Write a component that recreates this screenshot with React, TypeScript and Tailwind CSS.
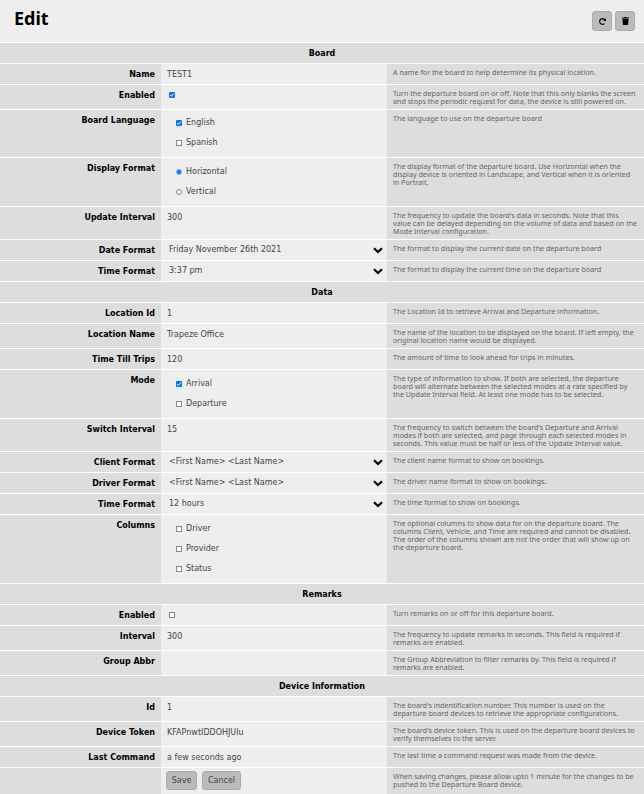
import { FaRedoAlt, FaTrash } from "react-icons/fa";
import type { ReactNode } from "react";

function Header({ title }: { title: string }) {
  return (
    <div className="h-[21px] bg-[#dddddd] border-b border-white text-center font-bold text-[8px] leading-[22px] text-black">
      {title}
    </div>
  );
}

function Row({ label, help, children, h }: { label: string; help?: ReactNode; children?: ReactNode; h: string }) {
  return (
    <div className={`grid grid-cols-[161px_226px_257px] border-b border-white ${h}`}>
      <div className="bg-[#dddddd] pr-[6px] pt-[6px] text-right font-bold text-[8px] leading-[10px] text-black">{label}</div>
      <div className="bg-[#eeeeee] text-[8px] leading-[10px] text-[#444444]">{children}</div>
      <div className="bg-[#dddddd] pl-[6px] pr-[6px] pt-[4px] text-[7.15px] leading-[8px] text-[#666666] font-['Noto_Sans',sans-serif]">{help}</div>
    </div>
  );
}

function Text({ children }: { children: ReactNode }) {
  return <div className="pl-[6px] pt-[6px]">{children}</div>;
}

function Select({ children }: { children: ReactNode }) {
  return (
    <div className="flex items-center justify-between pl-[8px] pr-[4px] pt-[5px]">
      <span>{children}</span>
      <svg width="10" height="7" viewBox="0 0 10 7">
        <path d="M1 1.2 L5 5 L9 1.2" stroke="black" strokeWidth="2.2" fill="none" />
      </svg>
    </div>
  );
}

function Check({ label, checked, radio }: { label: string; checked?: boolean; radio?: boolean }) {
  return (
    <div className="flex items-center gap-[4px] h-[20px] pl-[15px]">
      {radio ? (
        <span className={`w-[6px] h-[6px] rounded-full border ${checked ? "border-[#7ab3ff] bg-[#0075ff]" : "border-[#888888] bg-white"}`} />
      ) : (
        <Box checked={checked} />
      )}
      <span>{label}</span>
    </div>
  );
}

function Box({ checked }: { checked?: boolean }) {
  return checked ? (
    <svg width="6" height="6" viewBox="0 0 6 6" className="block">
      <rect width="6" height="6" rx="1" fill="#0075ff" />
      <path d="M1.1 3.1 L2.4 4.3 L4.9 1.6" stroke="white" strokeWidth="1" fill="none" />
    </svg>
  ) : (
    <span className="block w-[6px] h-[6px] border border-[#888888] bg-white" />
  );
}

function Options({ children, tight }: { children: ReactNode; tight?: boolean }) {
  return <div className={tight ? "pt-[2px]" : "pt-[3px]"}>{children}</div>;
}

const btn = "rounded-[3px] bg-[#bbbbbb] border border-[#aaaaaa] flex items-center justify-center";

export default function App() {
  return (
    <div className="w-[644px] h-[794px] overflow-hidden bg-[#eeeeee] font-['DejaVu_Sans',sans-serif]">
      <div className="h-[43px] flex justify-between border-b border-white pl-[14px] pr-[9px]">
        <h1 className="text-[18px] leading-[36px] font-bold text-black font-['Noto_Sans',sans-serif]">Edit</h1>
        <div className="flex gap-[3px] pt-[11px]">
          <button className={`w-[20px] h-[20px] ${btn}`}>
            <FaRedoAlt className="w-[7px] h-[7px] text-black" />
          </button>
          <button className={`w-[20px] h-[20px] ${btn}`}>
            <FaTrash className="w-[7px] h-[8px] text-black" />
          </button>
        </div>
      </div>

      <Header title="Board" />
      <Row h="h-[21px]" label="Name" help="A name for the board to help determine its physical location."><Text>TEST1</Text></Row>
      <Row h="h-[25px]" label="Enabled" help="Turn the departure board on or off. Note that this only blanks the screen and stops the periodic request for data, the device is still powered on.">
        <div className="pl-[8px] pt-[7px]"><Box checked /></div>
      </Row>
      <Row h="h-[48px]" label="Board Language" help="The language to use on the departure board">
        <Options tight><div className="pt-[1px]"><Check label="English" checked /><Check label="Spanish" /></div></Options>
      </Row>
      <Row h="h-[49px]" label="Display Format" help="The display format of the departure board. Use Horizontal when the display device is oriented in Landscape, and Vertical when it is oriented in Portrait.">
        <Options><div className="pt-[1px]"><Check label="Horizontal" radio checked /><Check label="Vertical" radio /></div></Options>
      </Row>
      <Row h="h-[33px]" label="Update Interval" help="The frequency to update the board's data in seconds. Note that this value can be delayed depending on the volume of data and based on the Mode Interval configuration."><Text>300</Text></Row>
      <Row h="h-[21px]" label="Date Format" help="The format to display the current date on the departure board"><Select>Friday November 26th 2021</Select></Row>
      <Row h="h-[21px]" label="Time Format" help="The format to display the current time on the departure board"><Select>3:37 pm</Select></Row>

      <Header title="Data" />
      <Row h="h-[21px]" label="Location Id" help="The Location Id to retrieve Arrival and Departure information."><Text>1</Text></Row>
      <Row h="h-[25px]" label="Location Name" help="The name of the location to be displayed on the board. If left empty, the original location name would be displayed."><Text>Trapeze Office</Text></Row>
      <Row h="h-[21px]" label="Time Till Trips" help="The amount of time to look ahead for trips in minutes."><Text>120</Text></Row>
      <Row h="h-[49px]" label="Mode" help="The type of information to show. If both are selected, the departure board will alternate between the selected modes at a rate specified by the Update Interval field. At least one mode has to be selected.">
        <Options><div className="pt-[1px]"><Check label="Arrival" checked /><Check label="Departure" /></div></Options>
      </Row>
      <Row h="h-[33px]" label="Switch Interval" help="The frequency to switch between the board's Departure and Arrival modes if both are selected, and page through each selected modes in seconds. This value must be half or less of the Update Interval value."><Text>15</Text></Row>
      <Row h="h-[21px]" label="Client Format" help="The client name format to show on bookings."><Select>{"<First Name> <Last Name>"}</Select></Row>
      <Row h="h-[21px]" label="Driver Format" help="The driver name format to show on bookings."><Select>{"<First Name> <Last Name>"}</Select></Row>
      <Row h="h-[21px]" label="Time Format" help="The time format to show on bookings."><Select>12 hours</Select></Row>
      <Row h="h-[69px]" label="Columns" help="The optional columns to show data for on the departure board. The columns Client, Vehicle, and Time are required and cannot be disabled. The order of the columns shown are not the order that will show up on the departure board.">
        <Options><div className="pt-[1px]"><Check label="Driver" /><Check label="Provider" /><Check label="Status" /></div></Options>
      </Row>

      <Header title="Remarks" />
      <Row h="h-[21px]" label="Enabled" help="Turn remarks on or off for this departure board.">
        <div className="pl-[8px] pt-[7px]"><Box /></div>
      </Row>
      <Row h="h-[25px]" label="Interval" help="The frequency to update remarks in seconds. This field is required if remarks are enabled."><Text>300</Text></Row>
      <Row h="h-[25px]" label="Group Abbr" help="The Group Abbreviation to filter remarks by. This field is required if remarks are enabled." />

      <Header title="Device Information" />
      <Row h="h-[25px]" label="Id" help="The board's indentification number. This number is used on the departure board devices to retrieve the appropriate configurations."><Text>1</Text></Row>
      <Row h="h-[25px]" label="Device Token" help="The board's device token. This is used on the departure board devices to verify themselves to the server."><Text>KFAPnwtIDDOHJUIu</Text></Row>
      <Row h="h-[21px]" label="Last Command" help="The last time a command request was made from the device."><Text>a few seconds ago</Text></Row>
      <Row h="h-[27px]" label="" help="When saving changes, please allow upto 1 minute for the changes to be pushed to the Departure Board device.">
        <div className="flex gap-[5px] pl-[5px] pt-[3px]">
          <button className={`h-[19px] w-[31px] text-[8px] text-[#444444] ${btn}`}>Save</button>
          <button className={`h-[19px] w-[39px] text-[8px] text-[#444444] ${btn}`}>Cancel</button>
        </div>
      </Row>
    </div>
  );
}
